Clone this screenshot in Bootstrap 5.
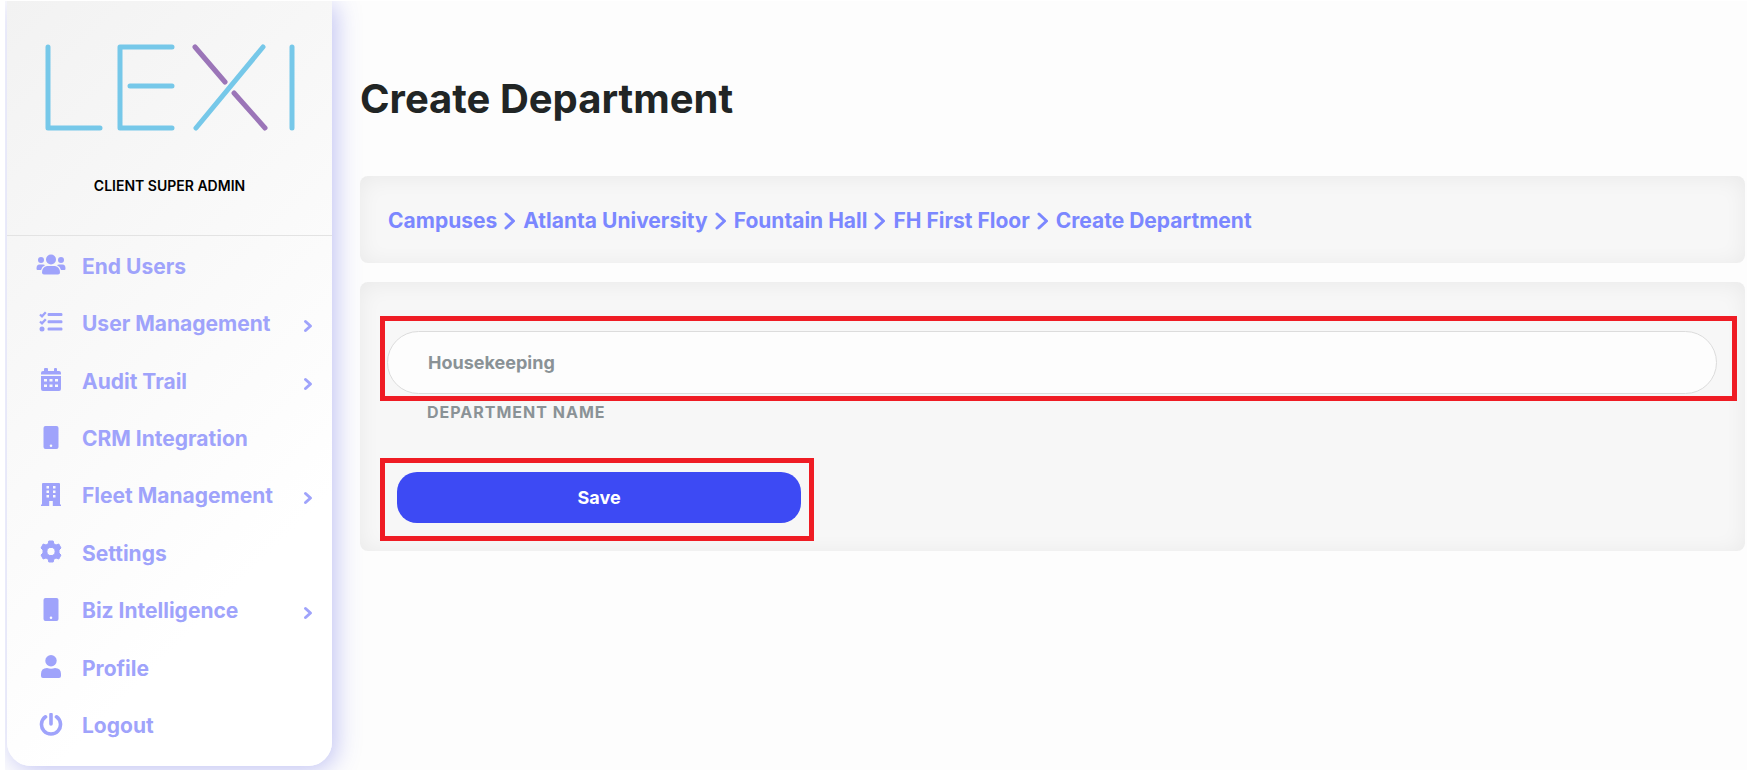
<!DOCTYPE html>
<html lang="en">
<head>
<meta charset="utf-8">
<meta name="viewport" content="width=device-width, initial-scale=1">
<title>Create Department</title>
<link href="https://cdn.jsdelivr.net/npm/bootstrap@5.3.0/dist/css/bootstrap.min.css" rel="stylesheet">
<style>
body { font-family: Inter, "Open Sans", sans-serif; font-weight: 700; background: #fff; }
.app-shell { margin: 1px 8px 1px 5px; padding-left: 2px; min-height: calc(100vh - 2px); background: #fdfdfd; overflow: hidden; }
.side-panel { width: 325px; min-height: calc(100vh - 6px); margin-bottom: 4px; border-radius: 0 0 24px 24px;
  background: linear-gradient(135deg, #f2f2f2 0%, #fff 75%); box-shadow: 4px 4px 24px rgba(80, 84, 225, .34); }
.brand { height: 235px; border-bottom: 1px solid #e3e3e3; padding-top: 41px; }
.brand svg { width: 252px; height: 90px; }
.role { margin-top: 44px; font-size: 14px; line-height: 20px; font-weight: 600; color: #000; }
.side-nav { padding: 2px 0 11px; }
.side-nav .nav-link { color: #9fa3fb; font-size: 21px; line-height: 24px; padding: 0 19px 0 29px; gap: 16px; }
.side-nav svg { width: 30px; height: 24px; margin-bottom: 3px; fill: currentColor; flex: none; }
.side-nav .caret, .crumbs .sep { fill: none; stroke: currentColor; stroke-width: 3; stroke-linecap: round; stroke-linejoin: round; }
.side-nav .caret { width: 10px; height: 14px; margin: 4px 0 0 auto; }
.main-area { padding: 74px 2px 24px 28px; min-width: 0; }
h1 { font-size: 40px; line-height: 48px; font-weight: 700; color: #212525; margin-bottom: 53px; }
.soft-card { background: #f7f7f7; border-radius: 8px; box-shadow: inset 0 2px 22px rgba(0, 0, 0, .06); }
.crumbs { padding: 31px 28px 29px; margin-bottom: 19px; font-size: 21px; line-height: 27px; color: #7b87ff; }
.crumbs a { color: inherit; text-decoration: none; }
.crumbs .sep { width: 12px; height: 18px; margin: 0 7px; }
.form-card { padding: 34px 8px 10px 20px; }
.marked { border: 5px solid #ef1c24; }
.marked-field { padding: 10px 15px 2px 2px; }
.marked-action { width: 32%; padding: 9px 8px 13px 12px; margin-top: 35px; }
.form-card .form-control { height: 63px; border: 1px solid #dcdcdc; border-radius: 32px; background: #fdfdfd; padding: 0 40px; font-size: 18px; font-weight: 700; color: #8a9296; }
.field-label { display: block; padding-left: 47px; font-size: 16px; line-height: 22px; letter-spacing: 1px; color: #8a9296; }
.btn-save { height: 51px; border-radius: 20px; background: #3d4af4; color: #fff; font-size: 18px; font-weight: 700; }
.btn-save:hover { background: #2f3bdc; color: #fff; }
</style>
</head>
<body>
<div class="app-shell d-flex align-items-start">
  <aside class="side-panel d-flex flex-column flex-shrink-0">
    <div class="brand text-center">
      <svg viewBox="0 0 252 90" role="img" aria-label="Lexi" fill="none" stroke="#76c8e9" stroke-width="5" stroke-linecap="round" stroke-linejoin="round">
        <path d="M4 5V86H56M128 5H76V86H128M86 44H128M219 5L152 86M248 5V86"/>
        <path stroke="#9b75b8" d="M151 5L181 40M190 51L221 86"/>
      </svg>
      <div class="role">CLIENT SUPER ADMIN</div>
    </div>
    <nav class="side-nav nav flex-column flex-fill flex-nowrap">
      <a class="nav-link d-flex align-items-center flex-fill" href="#">
        <svg viewBox="0 0 30 24"><circle cx="15" cy="6.500" r="5"/><circle cx="5" cy="7" r="3"/><circle cx="25" cy="7" r="3"/><path d="M11 13H19Q24 14 24 19.500Q24 21.500 22 21.500H8Q6 21.500 6 19.500Q6 14 11 13ZM3.500 11.500H7Q8.500 11.500 9 12.300Q6 13.500 5 17H1.500Q.5 17 .5 15.500Q.5 11.500 3.500 11.500ZM26.500 11.500H23Q21.500 11.500 21 12.300Q24 13.500 25 17H28.500Q29.500 17 29.500 15.500Q29.500 11.500 26.500 11.500Z"/></svg>
        End Users</a>
      <a class="nav-link d-flex align-items-center flex-fill" href="#">
        <svg viewBox="0 0 30 24"><path d="M12.500 2H25.500Q26.500 2 26.500 3.500T25.500 5H12.500Q11.500 5 11.500 3.500T12.500 2ZM12.500 9.200H25.500Q26.500 9.200 26.500 10.700T25.500 12.200H12.500Q11.500 12.200 11.500 10.700T12.500 9.200ZM12.500 16.400H25.500Q26.500 16.400 26.500 17.900T25.500 19.400H12.500Q11.500 19.400 11.500 17.900T12.500 16.400Z"/><circle cx="6" cy="17.900" r="2.500"/><path d="M4 3.500L6 5.400L9.800 1.300M4 10.500L6 12.400L9.800 8.300" fill="none" stroke="currentColor" stroke-width="2.300"/></svg>
        User Management<svg class="caret" viewBox="0 0 10 14"><path d="M2.500 2.500L7.500 7L2.500 11.500"/></svg></a>
      <a class="nav-link d-flex align-items-center flex-fill" href="#">
        <svg viewBox="0 0 30 24"><path fill-rule="evenodd" d="M9 0H11Q12 0 12 1V3H18V1Q18 0 19 0H20Q21 0 21 1V3H23Q25 3 25 5V6.500H5V5Q5 3 7 3H8V1Q8 0 9 0ZM5 8H25V21Q25 23 23 23H7Q5 23 5 21ZM8 11V13.500H11V11ZM13.500 11V13.500H16.500V11ZM19 11V13.500H22V11ZM8 16.500V19H11V16.500ZM13.500 16.500V19H16.500V16.500ZM19 16.500V19H22V16.500Z"/></svg>
        Audit Trail<svg class="caret" viewBox="0 0 10 14"><path d="M2.500 2.500L7.500 7L2.500 11.500"/></svg></a>
      <a class="nav-link d-flex align-items-center flex-fill" href="#">
        <svg viewBox="0 0 30 24"><path fill-rule="evenodd" d="M9.500 0H20.500Q22.500 0 22.500 2V21Q22.500 23 20.500 23H9.500Q7.500 23 7.500 21V2Q7.500 0 9.500 0ZM15 18.500A1.300 1.300 0 1 0 15 21.100A1.300 1.300 0 1 0 15 18.500Z"/></svg>
        CRM Integration</a>
      <a class="nav-link d-flex align-items-center flex-fill" href="#">
        <svg viewBox="0 0 30 24"><path fill-rule="evenodd" d="M7 0H23Q24 0 24 1V21.500H25V23H16.800V18H13.200V23H5V21.500H6V1Q6 0 7 0ZM10.500 3V5.500H13V3ZM17 3V5.500H19.500V3ZM10.500 7.500V10H13V7.500ZM17 7.500V10H19.500V7.500ZM10.500 12V14.500H13V12ZM17 12V14.500H19.500V12Z"/></svg>
        Fleet Management<svg class="caret" viewBox="0 0 10 14"><path d="M2.500 2.500L7.500 7L2.500 11.500"/></svg></a>
      <a class="nav-link d-flex align-items-center flex-fill" href="#">
        <svg viewBox="0 0 30 24"><path fill-rule="evenodd" stroke="currentColor" stroke-linejoin="round" d="M12.800 1H17.200L17.800 3.800L20 5L22.800 4L25 8L23 10V13L25 15L22.800 19L20 18L17.800 19.200L17.200 22H12.800L12.200 19.200L10 18L7.200 19L5 15L7 13V10L5 8L7.200 4L10 5L12.200 3.800ZM15 7.400A4.100 4.100 0 1 0 15 15.600A4.100 4.100 0 1 0 15 7.400Z"/></svg>
        Settings</a>
      <a class="nav-link d-flex align-items-center flex-fill" href="#">
        <svg viewBox="0 0 30 24"><path fill-rule="evenodd" d="M9.500 0H20.500Q22.500 0 22.500 2V21Q22.500 23 20.500 23H9.500Q7.500 23 7.500 21V2Q7.500 0 9.500 0ZM15 18.500A1.300 1.300 0 1 0 15 21.100A1.300 1.300 0 1 0 15 18.500Z"/></svg>
        Biz Intelligence<svg class="caret" viewBox="0 0 10 14"><path d="M2.500 2.500L7.500 7L2.500 11.500"/></svg></a>
      <a class="nav-link d-flex align-items-center flex-fill" href="#">
        <svg viewBox="0 0 30 24"><circle cx="15" cy="5.700" r="5.700"/><path d="M11 13Q15 14.500 19 13Q25 13 25 19V21Q25 23 23 23H7Q5 23 5 21V19Q5 13 11 13Z"/></svg>
        Profile</a>
      <a class="nav-link d-flex align-items-center flex-fill" href="#">
        <svg viewBox="0 0 30 24"><path d="M15 1.500V11M9.500 3.800A9.500 9.500 0 1 0 20.500 3.800" fill="none" stroke="currentColor" stroke-width="3.600" stroke-linecap="round"/></svg>
        Logout</a>
    </nav>
  </aside>
  <main class="main-area flex-fill">
    <h1>Create Department</h1>
    <nav class="crumbs soft-card d-flex flex-wrap align-items-center" aria-label="Breadcrumb">
      <a href="#">Campuses</a>
      <svg class="sep" viewBox="0 0 12 18"><path d="M2 2L9.500 9L2 16"/></svg>
      <a href="#">Atlanta University</a>
      <svg class="sep" viewBox="0 0 12 18"><path d="M2 2L9.500 9L2 16"/></svg>
      <a href="#">Fountain Hall</a>
      <svg class="sep" viewBox="0 0 12 18"><path d="M2 2L9.500 9L2 16"/></svg>
      <a href="#">FH First Floor</a>
      <svg class="sep" viewBox="0 0 12 18"><path d="M2 2L9.500 9L2 16"/></svg>
      <a href="#" aria-current="page">Create Department</a>
    </nav>
    <form class="form-card soft-card">
      <div class="marked marked-field">
        <input class="form-control" id="department" type="text" value="Housekeeping">
      </div>
      <label class="field-label" for="department">DEPARTMENT NAME</label>
      <div class="marked marked-action">
        <button class="btn btn-save border-0 w-100" type="button">Save</button>
      </div>
    </form>
  </main>
</div>
<script src="https://cdn.jsdelivr.net/npm/bootstrap@5.3.0/dist/js/bootstrap.bundle.min.js"></script>
</body>
</html>
